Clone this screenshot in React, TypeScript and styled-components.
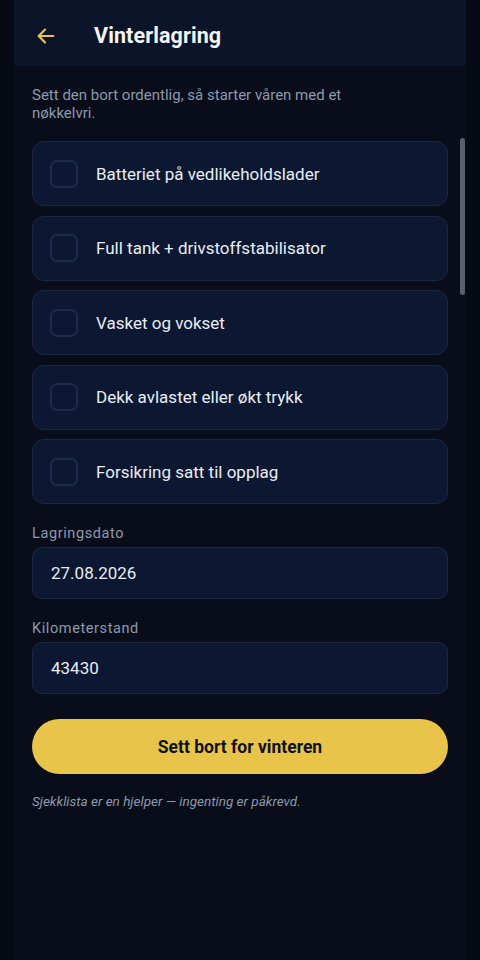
import React, { useState } from "react";
import styled, { createGlobalStyle } from "styled-components";

const GlobalStyle = createGlobalStyle`
  html, body {
    margin: 0;
    padding: 0;
    background: #060a14;
  }
  body {
    font-family: Roboto, "Noto Sans", sans-serif;
    -webkit-font-smoothing: antialiased;
  }
`;

const Page = styled.div`
  width: 452px;
  min-height: 960px;
  margin: 0 auto;
  background: #080d19;
  position: relative;
  display: flex;
  flex-direction: column;
`;

const Header = styled.header`
  height: 66px;
  box-sizing: border-box;
  background: #0c1429;
  display: flex;
  align-items: center;
  padding: 5px 0 0 20px;
  gap: 36px;
`;

const BackButton = styled.button`
  border: none;
  background: none;
  padding: 0;
  width: 24px;
  height: 24px;
  display: flex;
  align-items: center;
  justify-content: center;
  cursor: pointer;
`;

const Title = styled.h1`
  margin: 0;
  font-size: 21.5px;
  font-weight: 700;
  color: #f2f4f8;
  letter-spacing: 0.1px;
`;

const Content = styled.main`
  padding: 20px 18px 0 18px;
  display: flex;
  flex-direction: column;
`;

const Intro = styled.p`
  margin: 0 0 19px 0;
  max-width: 360px;
  font-size: 15px;
  line-height: 18px;
  color: #8d99ad;
`;

const List = styled.div`
  display: flex;
  flex-direction: column;
  gap: 9.5px;
`;

const Card = styled.label`
  height: 63px;
  box-sizing: content-box;
  border: 1px solid #1a2746;
  border-radius: 12px;
  background: #0c1731;
  display: flex;
  align-items: center;
  padding: 0 17px;
  gap: 18px;
  cursor: pointer;
`;

const Box = styled.span<{ $checked: boolean }>`
  width: 24px;
  height: 24px;
  border: 2px solid #1d2b4a;
  border-radius: 7px;
  background: ${(p) => (p.$checked ? "#e8c44a" : "transparent")};
  flex-shrink: 0;
`;

const CardText = styled.span`
  font-size: 17px;
  color: #e9edf3;
`;

const Field = styled.div`
  display: flex;
  flex-direction: column;
  gap: 5px;
  margin-top: 21px;
`;

const FieldLabel = styled.span`
  font-size: 14.5px;
  color: #8d99ad;
  letter-spacing: 0.6px;
  line-height: 17px;
`;

const Input = styled.input`
  height: 50px;
  box-sizing: content-box;
  border: 1px solid #1a2746;
  border-radius: 10px;
  background: #0c1731;
  color: #e9edf3;
  font-family: Roboto, "Noto Sans", sans-serif;
  font-size: 17px;
  padding: 0 18px;
  outline: none;
`;

const Submit = styled.button`
  margin-top: 25px;
  height: 55px;
  border: none;
  border-radius: 28px;
  background: #e8c44a;
  color: #0d111c;
  font-family: Roboto, "Noto Sans", sans-serif;
  font-size: 17.5px;
  font-weight: 700;
  cursor: pointer;
`;

const Note = styled.p`
  margin: 19px 0 0 0;
  font-size: 13.5px;
  font-style: italic;
  color: #8d99ad;
`;

const ScrollThumb = styled.div`
  position: absolute;
  right: 1px;
  top: 138px;
  width: 5px;
  height: 157px;
  border-radius: 3px;
  background: #5a5f6b;
`;

const items = [
  "Batteriet på vedlikeholdslader",
  "Full tank + drivstoffstabilisator",
  "Vasket og vokset",
  "Dekk avlastet eller økt trykk",
  "Forsikring satt til opplag",
];

export default function App() {
  const [checked, setChecked] = useState<boolean[]>(items.map(() => false));
  const [date, setDate] = useState("27.08.2026");
  const [km, setKm] = useState("43430");

  return (
    <>
      <GlobalStyle />
      <Page>
        <Header>
          <BackButton aria-label="Tilbake">
            <svg width="22" height="22" viewBox="0 0 24 24" fill="none" stroke="#e8c44a" strokeWidth="2.4" strokeLinecap="round" strokeLinejoin="round">
              <path d="M20 12H5" />
              <path d="M11 5l-7 7 7 7" />
            </svg>
          </BackButton>
          <Title>Vinterlagring</Title>
        </Header>
        <Content>
          <Intro>Sett den bort ordentlig, så starter våren med et nøkkelvri.</Intro>
          <List>
            {items.map((item, i) => (
              <Card
                key={item}
                onClick={() =>
                  setChecked((c) => c.map((v, j) => (j === i ? !v : v)))
                }
              >
                <Box $checked={checked[i]} />
                <CardText>{item}</CardText>
              </Card>
            ))}
          </List>
          <Field>
            <FieldLabel>Lagringsdato</FieldLabel>
            <Input value={date} onChange={(e) => setDate(e.target.value)} />
          </Field>
          <Field>
            <FieldLabel>Kilometerstand</FieldLabel>
            <Input value={km} onChange={(e) => setKm(e.target.value)} />
          </Field>
          <Submit>Sett bort for vinteren</Submit>
          <Note>Sjekklista er en hjelper — ingenting er påkrevd.</Note>
        </Content>
        <ScrollThumb />
      </Page>
    </>
  );
}
